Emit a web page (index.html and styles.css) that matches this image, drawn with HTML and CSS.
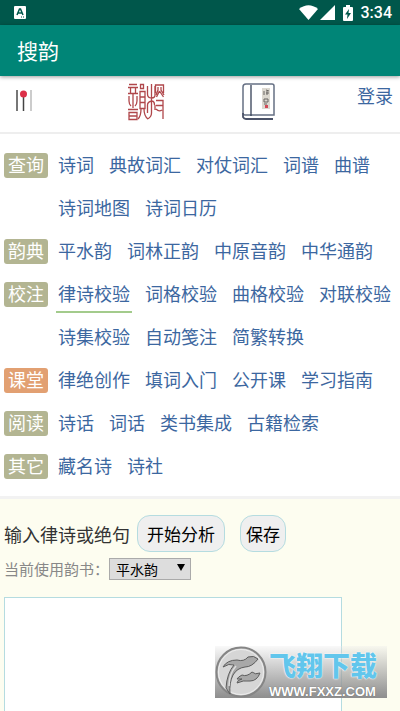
FILE: index.html
```html
<!DOCTYPE html>
<html lang="zh-CN">
<head>
<meta charset="utf-8">
<meta name="viewport" content="width=device-width, initial-scale=1">
<title>搜韵</title>
<link rel="stylesheet" href="styles.css">
</head>
<body>
<div class="status">
  <svg class="status-app" width="12" height="13" viewBox="0 0 12 13" aria-hidden="true"><rect width="12" height="13" rx="1" fill="#fff"/><path d="M3 9 5.500 3h1L9 9M4 7h4" fill="none" stroke="#00574b" stroke-width="1.500"/><path d="M7 11h1M9 11h1" stroke="#00574b"/></svg>
  <svg class="wifi" width="19" height="15" viewBox="0 0 19 15" aria-hidden="true"><path d="M0 4Q9.500-3.500 19 4L9.500 15Z" fill="#fff"/></svg>
  <svg class="signal" width="15" height="15" viewBox="0 0 15 15" aria-hidden="true"><path d="M15 0V15H0Z" fill="#fff"/></svg>
  <svg class="battery" width="10" height="16" viewBox="0 0 10 16" aria-hidden="true"><path d="M3 0h4v2h2q1 0 1 1v12q0 1-1 1H1q-1 0-1-1V3q0-1 1-1h2Z" fill="#fff"/><path d="M6 4 2 9.500h2.500L4 14l4-6H5.500Z" fill="#00574b"/></svg>
  <span class="clock">3:34</span>
</div>
<header class="appbar"><h1>搜韵</h1></header>
<div class="topnav">
  <a href="#" class="bars" aria-label="菜单">
    <svg width="18" height="22" viewBox="0 0 18 22"><path d="M2 0v21" stroke="#777" stroke-width="2"/><path d="M8.500 5v16" stroke="#444" stroke-width="1.500"/><path d="M16 0v21" stroke="#ccc" stroke-width="2"/><circle cx="8.500" cy="4" r="3.500" fill="#dc3048"/></svg>
  </a>
  <a href="#" class="seal" aria-label="首页">
    <svg width="38" height="38" viewBox="0 0 38 38" fill="none" stroke="#b0474b" stroke-width="1.300">
      <path d="M2 1.500h8M1 4.500h10M3.500 5v5M8.500 5v5M1 10.500h10M6 11v14M2 13v5q0 3 2 5M10 13v5q0 3-2 5M1 26.500h10M2 29.500h8v7H2ZM2 33h8"/>
      <path d="M13.500 1.500h3v4h-3ZM13 8.500h5v17h-5ZM13 14h5M13 19.500h5M14 26q0 7-3 10M17 26q0 7 4 10"/>
      <path d="M24.500 1v29q0 4-4 6M20.500 3v8q0 4 4 4t3.500-4V3M20.500 30V22q0-3 4-4M24.500 18q3 0 3 4"/>
      <path d="M28.500 10V2h8v8M31 4v3l-2 5M34 4v3l3 5M32.500 8l-3 6M32.500 8l4 6M29 17.500h7v5h-7M36 20v16M29 26q3 3 6 1M28 22v5"/>
    </svg>
  </a>
  <a href="#" class="book" aria-label="诗词">
    <svg width="34" height="38" viewBox="0 0 34 38" fill="none">
      <path d="M4 1h26q2 0 2 2v29H3q-2 0-2-2V4q0-3 3-3Z" stroke="#667084" stroke-width="1.500"/>
      <path d="M9 2v31" stroke="#343f55" stroke-width="1.300"/>
      <path d="M1 30v4q1 2 3 2h27" stroke="#4a5268" stroke-width="1.800"/>
      <path d="M20 5h8v21h-8Z" fill="#dcd8d0"/>
      <path d="M22 8v4M24 7l3 1M24 10h3M25 8v4M22 16h4v3h-4ZM22 21h3" stroke="#686562"/>
      <path d="M23 22h3v3h-3Z" fill="#d24a58"/>
    </svg>
  </a>
  <a href="#" class="login">登录</a>
</div>
<nav class="menu">
  <section class="group"><h2 class="tag">查询</h2><div class="links"><a href="#">诗词</a><a href="#">典故词汇</a><a href="#">对仗词汇</a><a href="#">词谱</a><a href="#">曲谱</a><a href="#">诗词地图</a><a href="#">诗词日历</a></div></section>
  <section class="group"><h2 class="tag">韵典</h2><div class="links"><a href="#">平水韵</a><a href="#">词林正韵</a><a href="#">中原音韵</a><a href="#">中华通韵</a></div></section>
  <section class="group"><h2 class="tag">校注</h2><div class="links"><a href="#" class="current">律诗校验</a><a href="#">词格校验</a><a href="#">曲格校验</a><a href="#">对联校验</a><a href="#">诗集校验</a><a href="#">自动笺注</a><a href="#">简繁转换</a></div></section>
  <section class="group"><h2 class="tag hot">课堂</h2><div class="links"><a href="#">律绝创作</a><a href="#">填词入门</a><a href="#">公开课</a><a href="#">学习指南</a></div></section>
  <section class="group"><h2 class="tag">阅读</h2><div class="links"><a href="#">诗话</a><a href="#">词话</a><a href="#">类书集成</a><a href="#">古籍检索</a></div></section>
  <section class="group"><h2 class="tag">其它</h2><div class="links"><a href="#">藏名诗</a><a href="#">诗社</a></div></section>
</nav>
<main class="editor">
  <div class="actions">
    <label for="poem">输入律诗或绝句</label>
    <button type="button" class="analyse">开始分析</button>
    <button type="button">保存</button>
  </div>
  <div class="rhyme">
    <label for="book">当前使用韵书：</label>
    <span class="picker"><select id="book"><option>平水韵</option><option>词林正韵</option></select></span>
  </div>
  <textarea id="poem"></textarea>
</main>
<div class="watermark">
  <svg width="54" height="52" viewBox="0 0 54 52" aria-hidden="true">
    <circle cx="26" cy="26" r="24.500" fill="#d6d6d6" stroke="#858585" stroke-width="2"/>
    <circle cx="26" cy="26" r="22.500" fill="none" stroke="#eee"/>
    <path d="M15 48Q14 37 18 29Q22 22 30 21Q37 21 43 13Q39 9 33 11Q29 16 22 14Q12 14 8 21Q14 17 19 19Q12 27 11 42Z" fill="#a8a8a8" stroke="#5c5c5c"/>
    <path d="M22 37Q28 34 35 35Q42 35 45 27Q40 29 37 26Q32 31 27 29Q23 31 22 33L27 33Q22 34 22 37Z" fill="#a8a8a8" stroke="#5c5c5c"/>
    <path d="M14 40Q14 28 21 20" fill="none" stroke="#ddd" stroke-width="1.500"/>
  </svg>
  <div class="mark-text"><span class="mark-name">飞翔下载</span><span class="mark-url">WWW.FXXZ.COM</span></div>
</div>
</body>
</html>
```
FILE: styles.css
```css
* { box-sizing: border-box; }

body {
  margin: 0;
  min-height: 100vh;
  display: flex;
  flex-direction: column;
  position: relative;
  background: #fff;
  color: #333;
  font-family: "Noto Sans CJK SC", sans-serif;
  font-size: 18px;
}

a { color: #3c67a0; text-decoration: none; }
svg { display: block; }

.status {
  display: flex;
  align-items: center;
  height: 25px;
  padding: 0 8px 0 14px;
  background: #00574b;
  color: #fff;
}
.status-app { margin-right: auto; }
.signal { margin-left: 2px; }
.battery { margin: 0 8px; }
.clock { font: 500 16px/25px Roboto, sans-serif; }

.appbar {
  height: 51px;
  padding: 0 17px;
  background: #008577;
  box-shadow: 0 1px 4px rgba(0, 0, 0, .4);
}
.appbar h1 {
  margin: 0;
  color: #fff;
  font-size: 21px;
  font-weight: 400;
  line-height: 50px;
}

.topnav {
  display: grid;
  grid-template-columns: 112px 115px 1fr auto;
  align-items: start;
  height: 58px;
  padding: 7px 7px 0 15px;
  border-bottom: 2px solid #eee;
}
.bars { margin-top: 7px; }
.login { line-height: 24px; }

.menu {
  padding: 10px 4px 8px;
  border-bottom: 3px solid #f2f2f2;
}
.group {
  display: flex;
  align-items: flex-start;
  gap: 8px;
}
.tag {
  flex: none;
  height: 25px;
  margin: 9px 0 0;
  padding: 0 4px;
  border-radius: 3px;
  background: #b3b592;
  color: #fff;
  font-size: 18px;
  font-weight: 400;
  line-height: 23px;
}
.hot { background: #e2a072; }
.links {
  display: flex;
  flex-wrap: wrap;
  column-gap: 11px;
  margin-right: -4px;
}
.links a {
  height: 40px;
  margin-bottom: 3px;
  padding: 0 2px;
  border-bottom: 2px solid transparent;
  line-height: 40px;
}
.links .current { border-color: #a3cb8c; }

.editor {
  flex: 1;
  display: flex;
  flex-direction: column;
  align-items: flex-start;
  padding: 16px 4px 0;
  background: #fdfdf0;
}
.actions {
  display: flex;
  align-items: center;
}
.actions button {
  height: 37px;
  margin-left: 15px;
  padding: 0 5px;
  border: 1px solid #b5dce0;
  border-radius: 13px;
  background: #efefef;
  color: #000;
  font: inherit;
  font-size: 17px;
}
.actions .analyse {
  margin-left: 7px;
  padding: 0 9px;
}
.rhyme {
  display: flex;
  align-items: center;
  height: 33px;
  color: #888;
  font-size: 15px;
}
.picker {
  position: relative;
  display: flex;
}
.picker::after {
  content: "";
  position: absolute;
  top: 6px;
  right: 6px;
  border: 4px solid transparent;
  border-top: 7px solid #000;
  border-bottom: 0;
  pointer-events: none;
}
.picker select {
  appearance: none;
  width: 82px;
  height: 22px;
  padding: 0 6px;
  border: 1px solid #aaa;
  border-radius: 0;
  background: #ddd;
  color: #000;
  font: 14px/20px "Noto Sans CJK SC", sans-serif;
}
textarea {
  flex: 1;
  width: calc(100% - 54px);
  min-height: 100px;
  margin-top: 12px;
  padding: 6px;
  border: 1px solid #b5dce0;
  border-bottom: 0;
  background: #fff;
  font: inherit;
  resize: none;
}

.watermark {
  position: absolute;
  right: 13px;
  bottom: 13px;
  display: flex;
  width: 172px;
  height: 52px;
  background: linear-gradient(rgba(235, 235, 235, .3), #8e8e8e);
}
.mark-text {
  display: flex;
  flex-direction: column;
  color: #fff;
}
.mark-name {
  color: #62c6ec;
  font-size: 27px;
  font-weight: 900;
  line-height: 37px;
  text-shadow: 0 0 1px #fff, 0 0 2px #fff;
}
.mark-url {
  margin-top: 2px;
  font: 700 13px/13px "Liberation Sans", sans-serif;
  text-shadow: 0 0 1px #555;
}
```
